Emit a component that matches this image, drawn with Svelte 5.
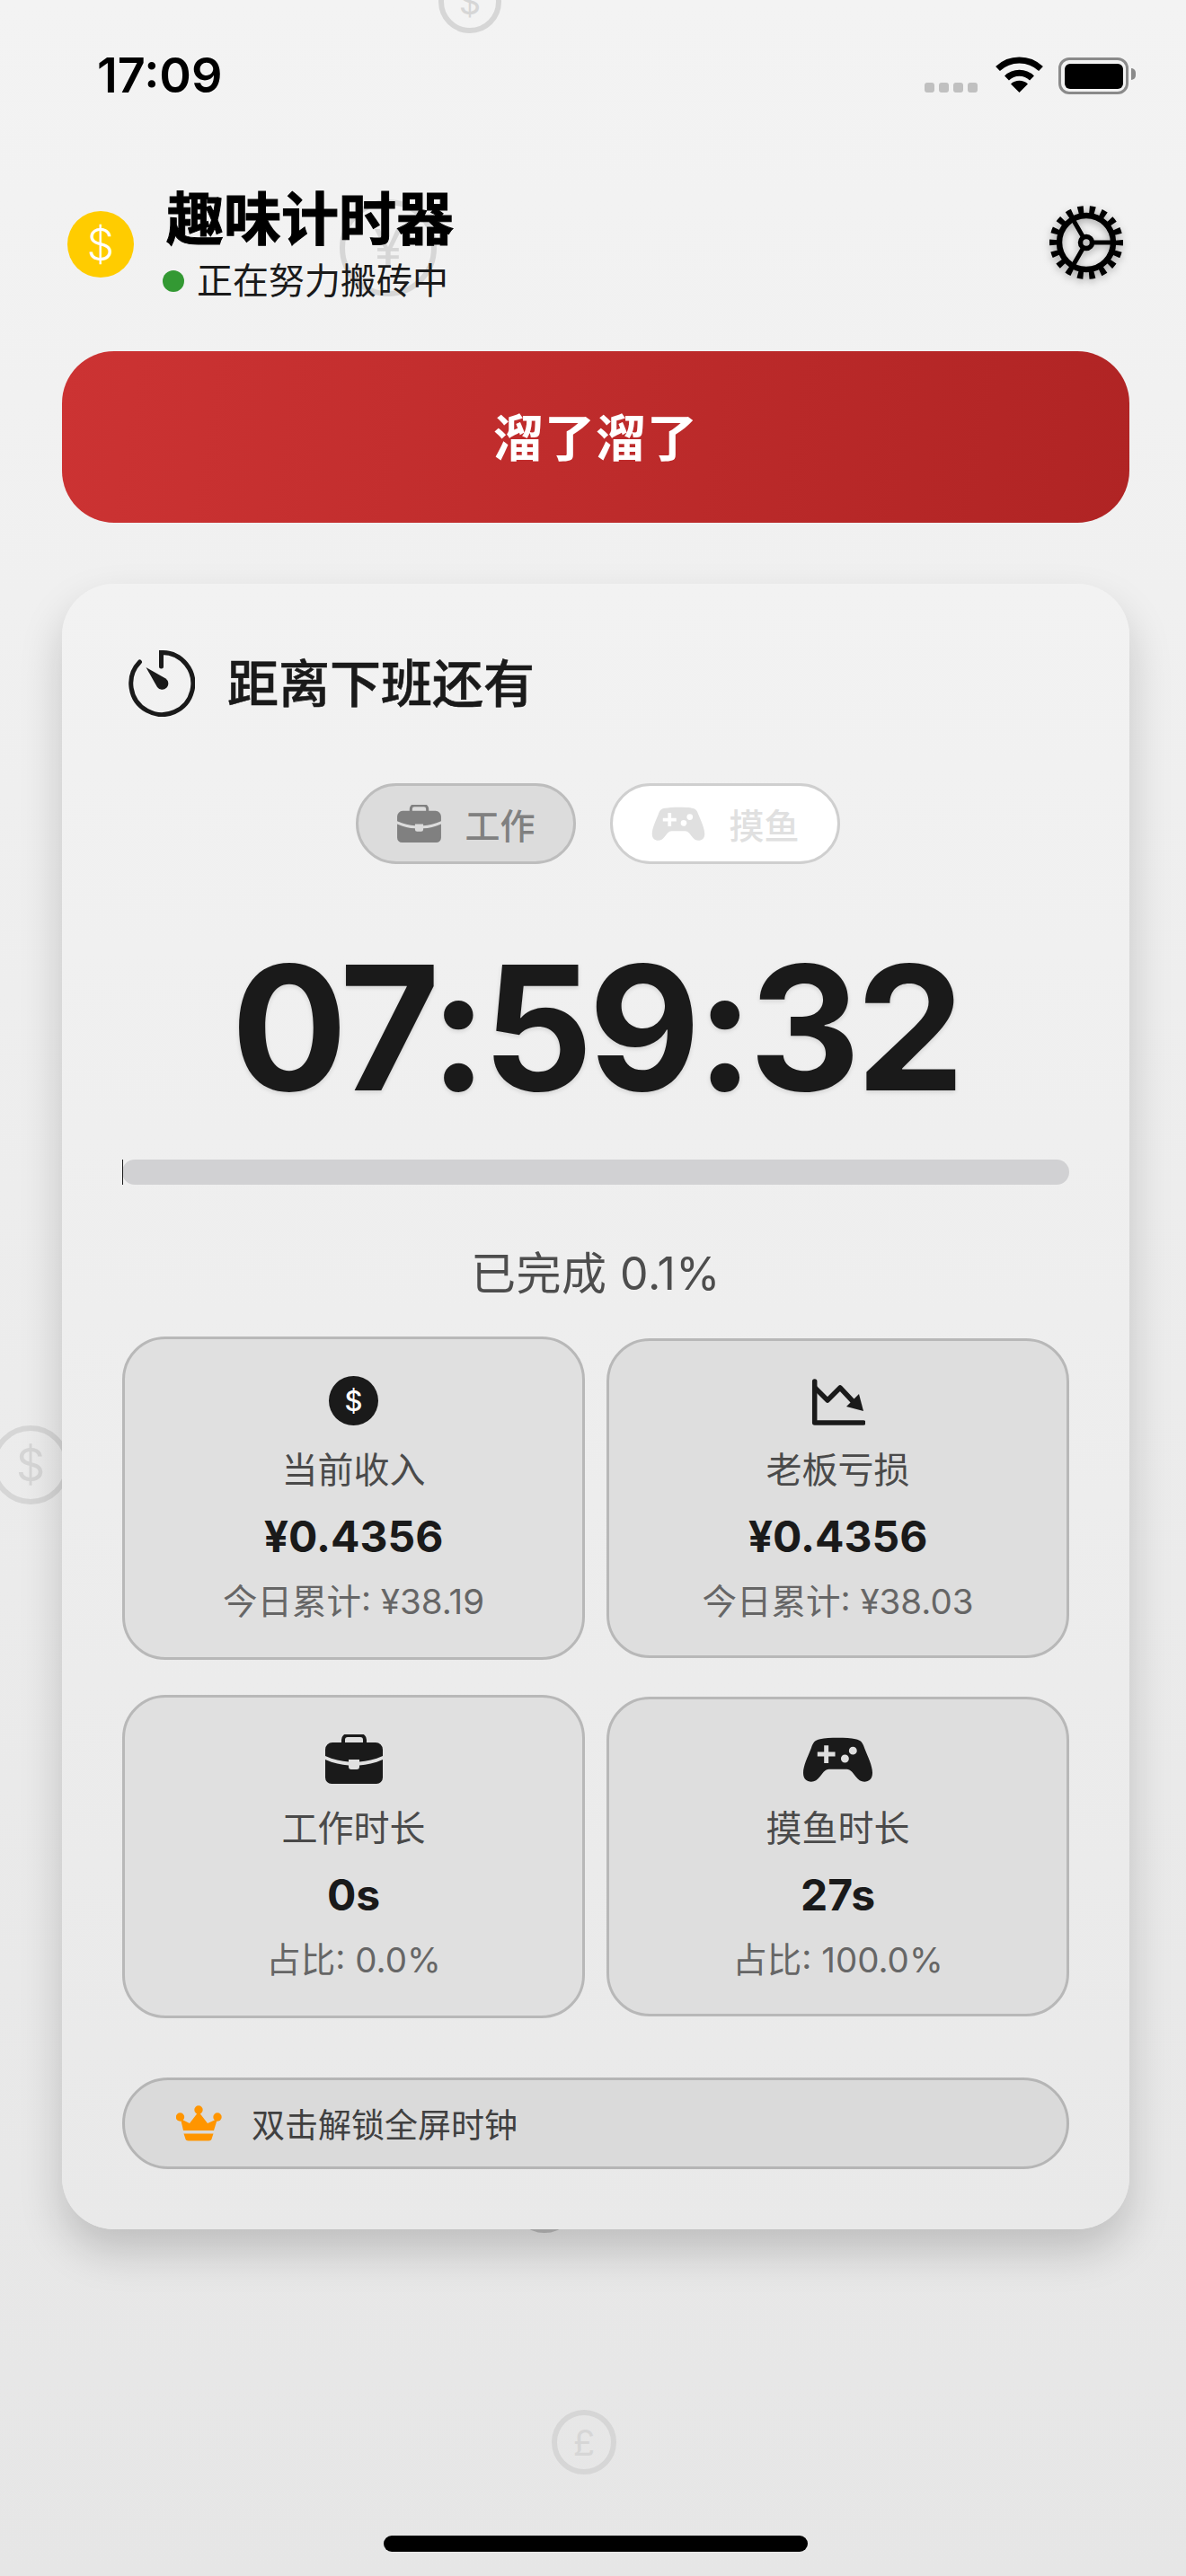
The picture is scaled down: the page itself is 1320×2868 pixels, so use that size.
<script>
  // stat cards, second row uses the same icons as the mode pills
  const coins = [
    { cls: 'c1', ch: '$' },
    { cls: 'c2', ch: '¥' },
    { cls: 'c3', ch: '$' },
    { cls: 'c4', ch: '$' },
    { cls: 'c5', ch: '£' }
  ];
</script>

{#snippet briefcase(w, h)}
  <svg width={w} height={h} viewBox="0 0 64 55" fill="currentColor">
    <path d="M20 10V6a5 5 0 0 1 5-5h14a5 5 0 0 1 5 5v4" fill="none" stroke="currentColor" stroke-width="4" />
    <path d="M8 9h48a8 8 0 0 1 8 8v7c-9 4-18 6-26 6.500V28H26v2.500C18 30 9 28 0 24v-7a8 8 0 0 1 8-8z" />
    <path d="M0 28c9 4 18 6 26 6.500V36a3 3 0 0 0 3 3h6a3 3 0 0 0 3-3v-1.500c8-.5 17-2.500 26-6.500v20a7 7 0 0 1-7 7H7a7 7 0 0 1-7-7z" />
  </svg>
{/snippet}

{#snippet gamepad(w, h)}
  <svg width={w} height={h} viewBox="0 0 80 50" fill="currentColor">
    <path fill-rule="evenodd" d="M20 2c10-2 30-2 40 0 6 1 8 4 10 10 4 10 9 20 9 28 0 7-4 10-9 10-4 0-7-2-10-6l-4-5c-2-2-4-3-6-3H30c-2 0-4 1-6 3l-4 5c-3 4-6 6-10 6-5 0-9-3-9-10 0-8 5-18 9-28 2-6 4-9 10-10zM24.500 9v7.500H17v5h7.500V29h5v-7.500H37v-5h-7.500V9zM57 10.500a4.500 4.500 0 1 0 0 9 4.500 4.500 0 0 0 0-9zM48 19.500a4.500 4.500 0 1 0 0 9 4.500 4.500 0 0 0 0-9z" />
  </svg>
{/snippet}

<div class="page">
  {#each coins as coin}
    <div class="coin {coin.cls}">{coin.ch}</div>
  {/each}

  <div class="status-bar">
    <span class="time">17:09</span>
    <div class="status-icons">
      <div class="signal"><i></i><i></i><i></i><i></i></div>
      <svg class="wifi" width="55" height="40" viewBox="0 0 55 40" fill="none" stroke="#000" stroke-width="7">
        <path d="M3.500 13.500a35 35 0 0 1 48 0" />
        <path d="M13.500 24a20 20 0 0 1 28 0" />
        <path d="M27.500 40 18 30.500a14 14 0 0 1 19 0z" fill="#000" stroke="none" />
      </svg>
      <div class="battery"><div class="battery-level"></div></div>
    </div>
  </div>

  <header class="header">
    <div class="logo">$</div>
    <div class="brand">
      <h1>趣味计时器</h1>
      <div class="state"><span class="dot"></span>正在努力搬砖中</div>
    </div>
    <svg class="gear" width="82" height="82" viewBox="-41 -41 82 82" fill="none" stroke="#000">
      <circle r="36.500" stroke-width="9" stroke-dasharray="6.200 6.540" stroke-dashoffset="3.100" />
      <circle r="30" stroke-width="6.500" />
      <path d="M6 0H30M-3 -5.200-15 -26M-3 5.200-15 26" stroke-width="5" />
      <circle r="6.500" stroke-width="5.500" />
    </svg>
  </header>

  <button class="leave">溜了溜了</button>

  <main class="card">
    <div class="card-title">
      <svg width="74" height="74" viewBox="0 0 74 74" fill="none" stroke="#1a1a1a" stroke-width="5" stroke-linecap="round">
        <path d="M36.500 18V2.500A34.500 34.500 0 1 1 12.500 13" />
        <path d="M19.500 19 41.500 31.500a6.800 6.800 0 1 1-9.500 9.500z" fill="#1a1a1a" stroke="none" />
      </svg>
      <h2>距离下班还有</h2>
    </div>

    <div class="modes">
      <div class="mode work">{@render briefcase(49, 42)}<span>工作</span></div>
      <div class="mode fun">{@render gamepad(60, 38)}<span>摸鱼</span></div>
    </div>

    <div class="clock">07:59:32</div>

    <div class="track"><div class="fill" style="width: 0.1%"></div></div>
    <div class="done">已完成 0.1%</div>

    <div class="stats">
      <div class="stat big">
        <div class="stat-icon"><div class="dollar">$</div></div>
        <div class="label">当前收入</div>
        <div class="value">¥0.4356</div>
        <div class="sub">今日累计: ¥38.19</div>
      </div>
      <div class="stat">
        <div class="stat-icon">
          <svg width="60" height="54" viewBox="42 24 60 54" fill="none" stroke="#1a1a1a" stroke-width="5.500" stroke-linecap="round" stroke-linejoin="round">
            <path d="M45.700 29V75H100" />
            <path d="M46 36 60 50 74 36 89 52" />
            <path d="M95 43 100 62 81 57z" fill="#1a1a1a" stroke="none" />
          </svg>
        </div>
        <div class="label">老板亏损</div>
        <div class="value">¥0.4356</div>
        <div class="sub">今日累计: ¥38.03</div>
      </div>
      <div class="stat big">
        <div class="stat-icon">{@render briefcase(64, 55)}</div>
        <div class="label">工作时长</div>
        <div class="value">0s</div>
        <div class="sub">占比: 0.0%</div>
      </div>
      <div class="stat">
        <div class="stat-icon">{@render gamepad(79, 50)}</div>
        <div class="label">摸鱼时长</div>
        <div class="value">27s</div>
        <div class="sub">占比: 100.0%</div>
      </div>
    </div>

    <div class="unlock">
      <svg width="51" height="40" viewBox="25 25 51 40" fill="#ff9500">
        <circle cx="29.500" cy="38" r="4.700" />
        <circle cx="50" cy="30" r="4.700" />
        <circle cx="71" cy="38" r="4.700" />
        <path d="M33 53 30 40 40 45 50 32 60 45 71 40 67 53z" />
        <path d="M33.500 56.500h33L65 61a4 4 0 0 1-4 3.500H39a4 4 0 0 1-4-3.500z" />
      </svg>
      <span>双击解锁全屏时钟</span>
    </div>
  </main>

  <div class="home-bar"></div>
</div>

<style>
  :global(body) {
    margin: 0;
  }

  .page {
    position: relative;
    width: 1320px;
    height: 2868px;
    overflow: hidden;
    background: linear-gradient(180deg, #f3f3f3 0%, #e6e6e6 100%);
    font-family: Inter, "Noto Sans CJK SC", sans-serif;
    color: #1a1a1a;
  }

  /* floating background coins */
  .coin {
    position: absolute;
    display: flex;
    align-items: center;
    justify-content: center;
    box-sizing: border-box;
    border: 6px solid #d6d6d6;
    border-radius: 50%;
    color: #d6d6d6;
  }
  .c1 { left: 488px; top: -33px; width: 70px; height: 70px; font-size: 38px; }
  .c2 { left: 378px; top: 222px; width: 108px; height: 108px; font-size: 58px; }
  .c3 { left: -10px; top: 1587px; width: 88px; height: 88px; font-size: 50px; }
  .c4 { left: 570px; top: 2414px; width: 72px; height: 72px; background: #c4c4c4; border-color: #bcbcbc; }
  .c5 { left: 614px; top: 2683px; width: 72px; height: 72px; font-size: 40px; }

  .status-bar {
    position: relative;
    display: flex;
    align-items: flex-start;
    justify-content: space-between;
    box-sizing: border-box;
    height: 205px;
    padding: 54px 64px 0 108px;
  }
  .time {
    font-size: 54px;
    line-height: 60px;
    font-weight: 600;
    color: #000;
  }
  .status-icons {
    display: flex;
    align-items: flex-start;
    padding-top: 10px;
  }
  .signal {
    display: flex;
    gap: 5px;
    margin: 28px 19px 0 0;
  }
  .signal i {
    width: 11px;
    height: 11px;
    border-radius: 3px;
    background: #c0c0c0;
  }
  .wifi {
    margin-right: 16px;
    margin-top: -1px;
  }
  .battery {
    position: relative;
    box-sizing: border-box;
    width: 78px;
    height: 41px;
    padding: 3.500px;
    border: 3.500px solid #8a8a8a;
    border-radius: 12px;
  }
  .battery::after {
    content: "";
    position: absolute;
    right: -11px;
    top: 9px;
    width: 5px;
    height: 13px;
    border-radius: 0 6px 6px 0;
    background: #8a8a8a;
  }
  .battery-level {
    height: 100%;
    border-radius: 6px;
    background: #000;
  }

  .header {
    position: relative;
    display: flex;
    align-items: center;
    height: 135px;
    padding: 0 70px 0 75px;
  }
  .logo {
    display: flex;
    align-items: center;
    justify-content: center;
    width: 74px;
    height: 74px;
    margin-top: -2px;
    border-radius: 50%;
    background: #ffcc00;
    color: #fff;
    font-size: 48px;
    font-weight: 300;
  }
  .brand {
    flex: 1;
    margin: -2px 0 0 36px;
  }
  h1 {
    margin: 0;
    font-size: 64px;
    line-height: 76px;
    font-weight: 700;
    -webkit-text-stroke: 1px #000;
    color: #000;
  }
  .state {
    display: flex;
    align-items: center;
    margin-top: 7px;
    margin-left: -4px;
    font-size: 40px;
    line-height: 48px;
    color: #1a1a1a;
  }
  .dot {
    width: 24px;
    height: 24px;
    margin-right: 14px;
    border-radius: 50%;
    background: #339933;
  }
  .gear {
    margin-top: -5px;
    filter: drop-shadow(0 3px 4px rgba(0, 0, 0, 0.3));
  }

  .leave {
    position: relative;
    display: block;
    width: 1188px;
    height: 191px;
    margin: 51px 0 0 69px;
    padding: 0 0 6px;
    border: none;
    border-radius: 58px;
    background: linear-gradient(100deg, #cc3333 0%, #b02424 100%);
    color: #fff;
    font-family: inherit;
    font-size: 56px;
    font-weight: 700;
    letter-spacing: 1px;
  }

  .card {
    position: relative;
    box-sizing: border-box;
    width: 1188px;
    height: 1832px;
    margin: 68px 0 0 69px;
    padding: 74px 67px 67px;
    border-radius: 58px;
    background: linear-gradient(180deg, #f2f2f2 0%, #e9e9e9 100%);
    box-shadow: 0 24px 48px rgba(0, 0, 0, 0.18);
  }
  .card-title {
    display: flex;
    align-items: center;
    gap: 36px;
    margin-left: 7px;
  }
  h2 {
    margin: 2px 0 0;
    font-size: 57px;
    line-height: 72px;
    font-weight: 500;
    -webkit-text-stroke: 0.6px #1a1a1a;
    color: #1a1a1a;
  }

  .modes {
    display: flex;
    justify-content: center;
    gap: 38px;
    margin: 74px 0 0 5px;
  }
  .mode {
    display: flex;
    align-items: center;
    gap: 26px;
    box-sizing: border-box;
    height: 90px;
    padding: 0 42px 0 43px;
    border: 3px solid #bdbdbd;
    border-radius: 45px;
    background: #dcdcdc;
    color: #808080;
    font-size: 39px;
    font-weight: 500;
  }
  .mode.fun {
    gap: 27px;
    border-color: #cfcfcf;
    background: #fff;
    color: #e0e0e0;
  }

  .clock {
    margin-top: 86px;
    height: 192px;
    font-size: 192px;
    line-height: 192px;
    font-weight: 700;
    letter-spacing: -5px;
    text-align: center;
    text-shadow: 0 2px 5px rgba(0, 0, 0, 0.12);
  }

  .track {
    height: 28px;
    margin-top: 51px;
    border-radius: 14px;
    background: #d1d1d3;
  }
  .fill {
    height: 100%;
    background: #1a1a1a;
  }
  .done {
    margin-top: 69px;
    font-size: 50px;
    line-height: 60px;
    letter-spacing: 0.5px;
    text-align: center;
    color: #4d4d4d;
  }

  .stats {
    display: grid;
    grid-template-columns: 515px 515px;
    grid-template-rows: 360px 360px;
    justify-content: space-between;
    align-items: center;
    row-gap: 39px;
    margin-top: 40px;
  }
  .stat {
    display: flex;
    flex-direction: column;
    align-items: center;
    justify-content: center;
    box-sizing: border-box;
    height: 356px;
    border: 3px solid #b8b8b8;
    border-radius: 48px;
    background: #dedede;
  }
  .stat.big {
    height: 360px;
    background: #e0e0e0;
  }
  .stat-icon {
    display: flex;
    align-items: center;
    justify-content: center;
    height: 60px;
  }
  .dollar {
    display: flex;
    align-items: center;
    justify-content: center;
    width: 55px;
    height: 55px;
    border-radius: 50%;
    background: #1a1a1a;
    color: #fff;
    font-size: 31px;
    font-weight: 500;
  }
  .label {
    margin-top: 19px;
    font-size: 40px;
    line-height: 56px;
    color: #4a4a4a;
  }
  .value {
    margin-top: 16px;
    font-size: 48px;
    line-height: 60px;
    font-weight: 700;
  }
  .sub {
    margin-top: 18px;
    font-size: 38.500px;
    line-height: 48px;
    color: #666;
  }

  .unlock {
    display: flex;
    align-items: center;
    gap: 33px;
    box-sizing: border-box;
    height: 102px;
    margin-top: 66px;
    padding-left: 57px;
    border: 3px solid #b5b5b5;
    border-radius: 51px;
    background: #dadada;
    font-size: 37px;
    color: #404040;
  }

  .home-bar {
    position: absolute;
    left: 427px;
    top: 2823px;
    width: 472px;
    height: 18px;
    border-radius: 9px;
    background: #000;
  }
</style>
